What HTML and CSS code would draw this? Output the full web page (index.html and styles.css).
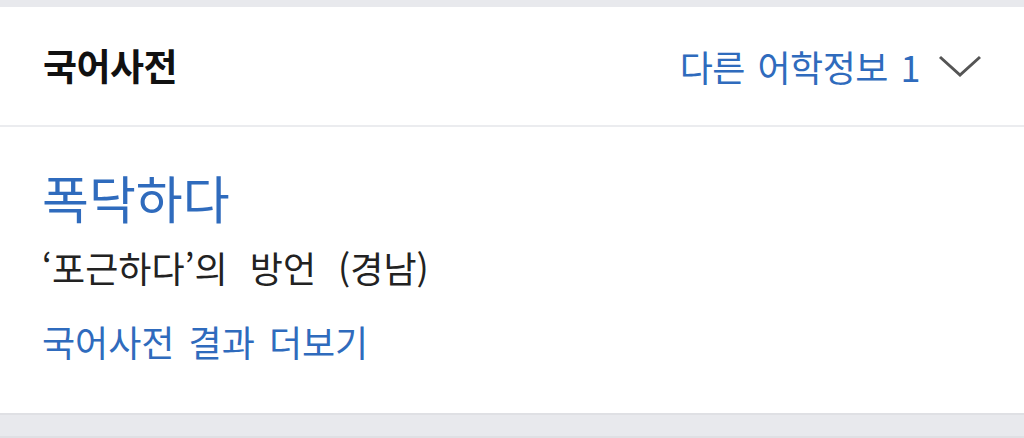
FILE: index.html
```html
<!DOCTYPE html>
<html lang="ko">
<head>
<meta charset="utf-8">
<link rel="stylesheet" href="styles.css">
</head>
<body>
<section class="card">
  <header class="card-head">
    <h2 class="title">국어사전</h2>
    <div class="more-info">
      <span class="more-label">다른 어학정보 1</span>
      <svg class="chev" width="44" height="24" viewBox="0 0 44 24"><path d="M2 3 L22 21 L42 3" fill="none" stroke="#555" stroke-width="3"/></svg>
    </div>
  </header>
  <div class="card-body">
    <div class="word">폭닥하다</div>
    <div class="meaning">‘포근하다’의 방언 (경남)</div>
    <a class="more-link">국어사전 결과 더보기</a>
  </div>
</section>
<div class="next-card"></div>
</body>
</html>
```
FILE: styles.css
```css
html, body {
  margin: 0;
  padding: 0;
}
body {
  background: #e8e9ed;
  font-family: "Noto Sans CJK KR", "Noto Sans", sans-serif;
  padding-top: 7px;
  height: 438px;
  box-sizing: border-box;
  overflow: hidden;
}
.card {
  background: #fff;
  border-bottom: 2px solid #dfe0e4;
}
.card-head {
  height: 120px;
  box-sizing: border-box;
  border-bottom: 2px solid #ebecef;
  display: flex;
  align-items: center;
  justify-content: space-between;
  padding: 0 42px 0 43px;
}
.title {
  margin: 0;
  font-size: 37px;
  font-weight: 700;
  color: #111;
  letter-spacing: -0.5px;
  line-height: 48px;
  position: relative;
  top: -1px;
}
.more-info {
  display: flex;
  align-items: center;
  gap: 18px;
}
.more-label {
  font-size: 36px;
  color: #2f6bbd;
  letter-spacing: -0.5px;
  word-spacing: 3px;
  line-height: 48px;
}
.chev {
  display: block;
}
.card-body {
  padding: 38px 42px 50px;
  display: flex;
  flex-direction: column;
  align-items: flex-start;
}
.word {
  font-size: 51px;
  color: #2f6bbd;
  line-height: 64px;
}
.meaning {
  font-size: 36px;
  color: #222;
  line-height: 44px;
  margin-top: 16px;
  word-spacing: 12px;
}
.more-link {
  font-size: 36px;
  color: #2f6bbd;
  line-height: 44px;
  margin-top: 30px;
  word-spacing: 4px;
}
.next-card {
  margin-top: 21px;
  border-top: 2px solid #dfe0e4;
  height: 20px;
}
```
